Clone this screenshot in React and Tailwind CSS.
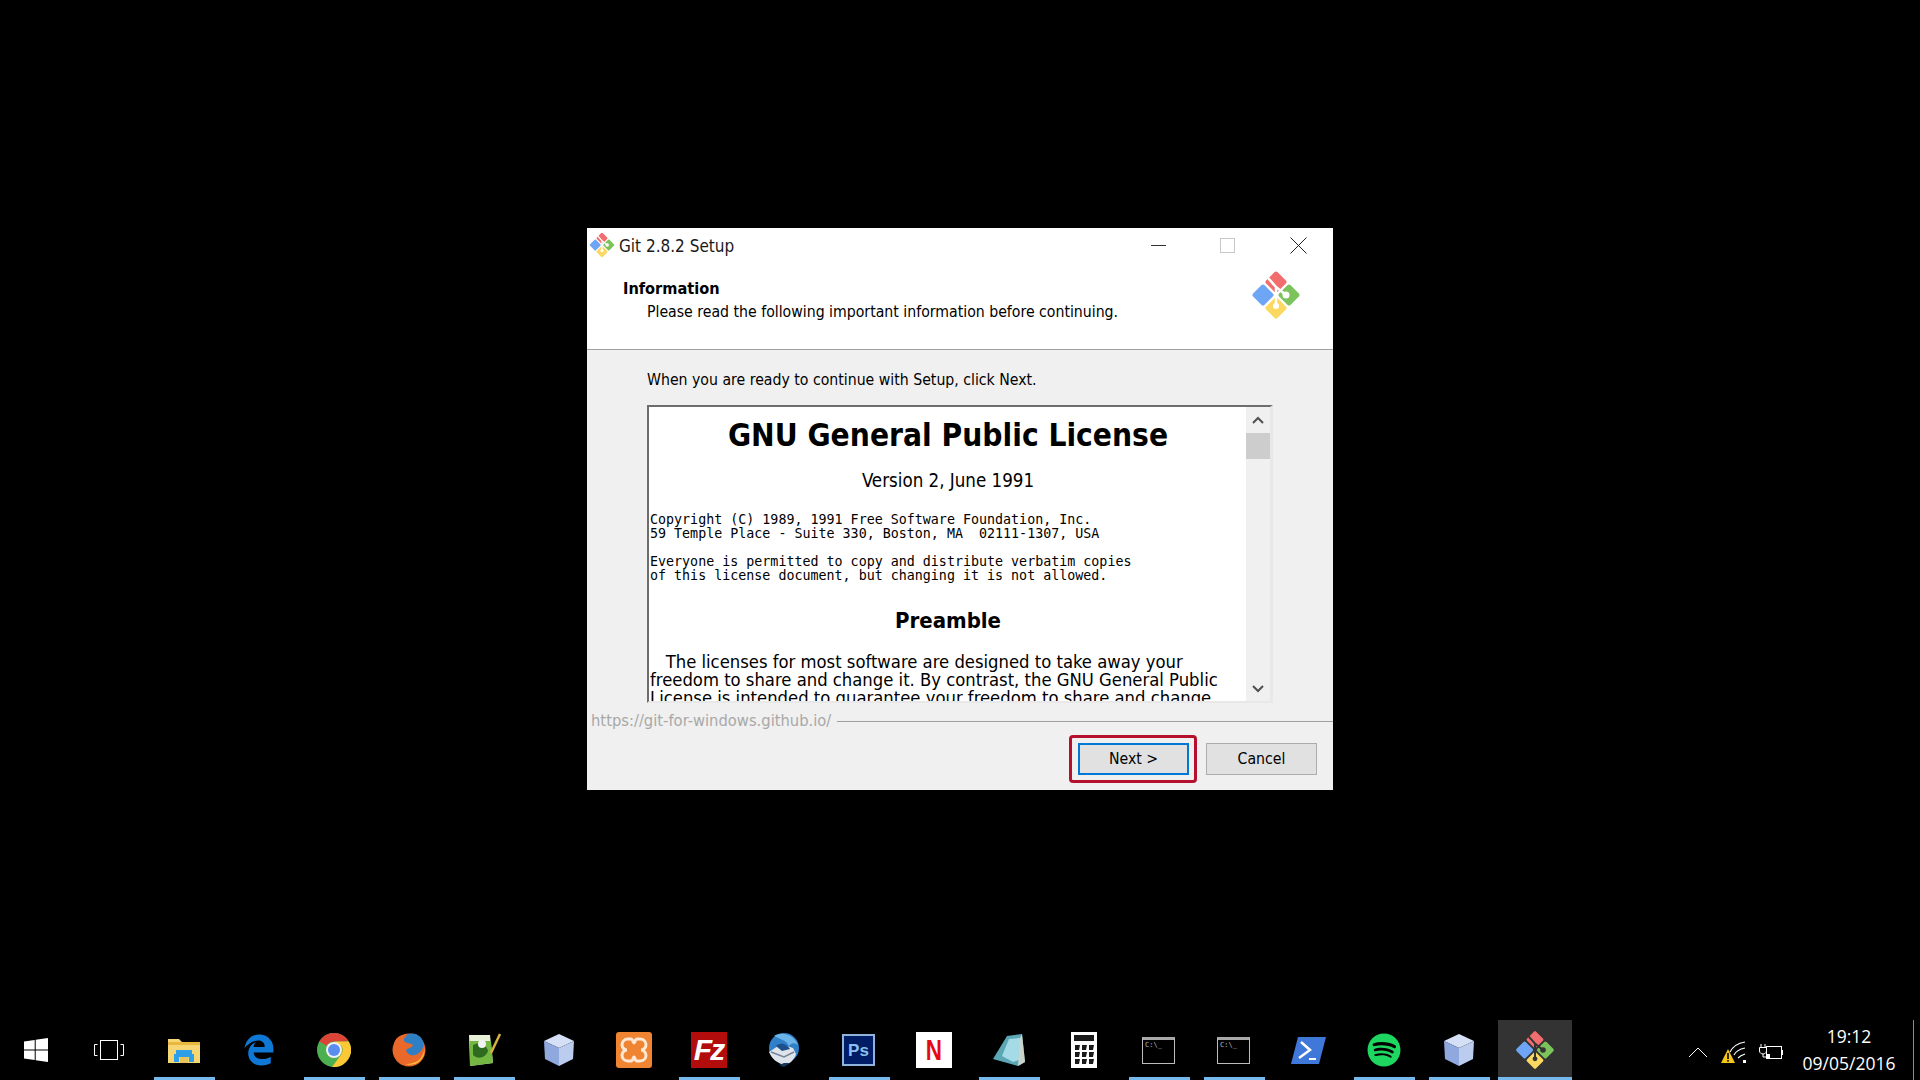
import { FaSpotify } from 'react-icons/fa';
import { FaEdgeLegacy } from 'react-icons/fa6';

const ui = "font-['DejaVu_Sans',sans-serif] [font-stretch:condensed]";

// Git for Windows diamond, the taskbar one has dark branch lines
const GitIcon = ({ className, dark }) => (
  <svg className={className} viewBox="0 0 50 50">
    <rect x="-8" y="-8" width="16" height="16" rx="2" fill="#f26d6d" transform="translate(25 12) rotate(45)" />
    <rect x="-8" y="-8" width="16" height="16" rx="2" fill="#6ea6f5" transform="translate(12 25) rotate(45)" />
    <rect x="-8" y="-8" width="16" height="16" rx="2" fill="#7cc35b" transform="translate(38 25) rotate(45)" />
    <rect x="-8" y="-8" width="16" height="16" rx="2" fill="#fbd85f" transform="translate(25 38) rotate(45)" />
    <path
      d="M17 8 L25 17 L25 36 M25 17 L35 25"
      stroke={dark ? '#333333' : '#ffffff'}
      strokeWidth="2.5"
      fill="none"
    />
    <circle cx="25" cy="36" r="3" fill={dark ? '#333333' : '#ffffff'} />
    <circle cx="35" cy="25" r="3.5" fill={dark ? '#333333' : '#ffffff'} />
  </svg>
);

const WindowsIcon = () => (
  <svg className="w-6 h-6" viewBox="0 0 24 24" fill="#ffffff">
    <path d="M0 3.4 L10.7 1.9 V11.4 H0 Z M11.7 1.8 L24 0 V11.4 H11.7 Z M0 12.6 H10.7 V22.1 L0 20.6 Z M11.7 12.6 H24 V24 L11.7 22.2 Z" />
  </svg>
);

const TaskViewIcon = () => (
  <svg className="w-[32px] h-[22px]" viewBox="0 0 32 22" fill="none" stroke="#ffffff" strokeWidth="1">
    <rect x="7.5" y="1.5" width="17" height="19" />
    <path d="M4.5 5.5 H1.5 V16.5 H4.5 M27.5 5.5 H30.5 V16.5 H27.5" />
  </svg>
);

const ExplorerIcon = () => (
  <svg className="w-8 h-[26px]" viewBox="0 0 32 26">
    <path d="M0 2 H11 L14 5 H32 V26 H0 Z" fill="#f7d774" />
    <rect x="0" y="5" width="32" height="3" fill="#e8b93e" />
    <path d="M8 13 H24 V17 H26 V25 H21 V20 H11 V25 H6 V17 H8 Z" fill="#2f9fe8" />
    <rect x="12" y="20" width="8" height="6" fill="#e9c45a" />
  </svg>
);

const ChromeIcon = () => (
  <svg className="w-[34px] h-[34px]" viewBox="0 0 34 34">
    <circle cx="17" cy="17" r="17" fill="#4caf50" />
    <path d="M17 0 A17 17 0 0 1 31.7 8.5 L17 8.5 A8.5 8.5 0 0 0 9.6 12.8 L2.3 8.5 A17 17 0 0 1 17 0 Z" fill="#db4437" />
    <path d="M31.7 8.5 A17 17 0 0 1 15 33.9 L24.4 21.3 A8.5 8.5 0 0 0 24.4 12.7 L17 8.5 Z" fill="#fcc934" />
    <circle cx="17" cy="17" r="8" fill="#f1f1f1" />
    <circle cx="17" cy="17" r="6" fill="#5b8def" />
  </svg>
);

const FirefoxIcon = () => (
  <svg className="w-[34px] h-[34px]" viewBox="0 0 34 34">
    <circle cx="17" cy="17" r="16.5" fill="#e8652b" />
    <circle cx="20" cy="12" r="11.5" fill="#2f7fc4" />
    <path d="M3 8 C6 2 13 1 15 3 C12 4 11 7 13 9 C16 11 19 10 21 12 C20 15 16 15 14 17 C15 21 19 23 23 22 C27 21 30 17 32 13 C33 22 28 31 19 32 C9 33 2 25 1.500 17 C1.500 14 2 11 3 8 Z" fill="#e9682a" />
    <path d="M28 26 C31 22 33 18 32 13 C34 21 30 28 23 31 C19 32 16 32 13 31 C19 31 24 30 28 26 Z" fill="#fbc43c" />
  </svg>
);

const NotepadIcon = () => (
  <svg className="w-[34px] h-[34px]" viewBox="0 0 34 34">
    <path d="M2 2 H23 L26 30 L3 33 Z" fill="#e8f0d8" />
    <path d="M3 8 H24 L26 30 L3 33 Z" fill="#74b843" />
    <path d="M6 12 C12 8 20 12 21 18 C18 26 10 26 6 22 Z" fill="#2e6b1e" />
    <circle cx="15" cy="11" r="4" fill="#f2f2f2" />
    <path d="M33 1 L24 20" stroke="#d8b23e" strokeWidth="2.5" />
  </svg>
);

const CubeIcon = () => (
  <svg className="w-8 h-[34px]" viewBox="0 0 32 34">
    <polygon points="16,1 31,8 16,15 1,8" fill="#d5dff5" />
    <polygon points="1,8 16,15 16,33 2,26" fill="#8fa9df" />
    <polygon points="31,8 16,15 16,33 30,26" fill="#bcccee" />
  </svg>
);

const XamppIcon = () => (
  <svg className="w-9 h-9" viewBox="0 0 36 36">
    <rect width="36" height="36" rx="3" fill="#ef8532" />
    <path
      d="M12 7 H15 C17 7 17 11 18 11 C19 11 19 7 21 7 H24 C28 7 30 10 30 13 C30 16 27 18 25 18 C27 18 30 20 30 23 C30 26 28 29 24 29 H21 C19 29 19 25 18 25 C17 25 17 29 15 29 H12 C8 29 6 26 6 23 C6 20 9 18 11 18 C9 18 6 16 6 13 C6 10 8 7 12 7 Z"
      fill="none"
      stroke="#ffe9d6"
      strokeWidth="3"
    />
  </svg>
);

const FileZillaIcon = () => (
  <div className="w-9 h-9 bg-[#b30c0c] flex items-center justify-center text-white font-['Liberation_Sans',sans-serif] font-bold italic text-[30px] leading-none tracking-[-2px]">
    Fz
  </div>
);

const ThunderbirdIcon = () => (
  <svg className="w-[34px] h-[34px]" viewBox="0 0 34 34">
    <circle cx="17" cy="15" r="15" fill="#2f7fc9" />
    <path d="M7 3 C14 -2 27 1 31 12 C27 9 24 10 22 13 C19 7 13 6 7 3 Z" fill="#6cb4e8" />
    <path d="M2 19 L14 11 L26 15 L29 21 C27 27 23 31 17 32 C10 30 5 26 2 19 Z" fill="#dfe3ea" />
    <path d="M4 19 L17 24 L27 19" stroke="#77849a" strokeWidth="1.500" fill="none" />
    <path d="M9 13 C13 9 20 11 23 16 L15 18 Z" fill="#1d4f8a" />
    <path d="M12 32 L17 34 L23 30 L17 30 Z" fill="#16395f" />
  </svg>
);

const PhotoshopIcon = () => (
  <div className="w-[33px] h-[32px] bg-[#001d66] border-2 border-[#8fb4dc] flex items-center justify-center text-[#8cc0f0] font-['Liberation_Sans',sans-serif] font-bold text-[17px] leading-none">
    Ps
  </div>
);

const NetflixIcon = () => (
  <div className="w-9 h-9 bg-white flex items-center justify-center text-[#e50914] font-['Liberation_Sans',sans-serif] font-bold text-[30px] leading-none">
    <span className="inline-block scale-x-75">N</span>
  </div>
);

const CrystalIcon = () => (
  <svg className="w-8 h-8" viewBox="0 0 32 32">
    <polygon points="0,25 14,2 29,0 32,28 25,32" fill="#5aa7b5" />
    <polygon points="9,22 16,5 27,4 29,25 20,28" fill="#a5dbe6" />
    <polygon points="29,0 32,28 25,32 27,4" fill="#c9d4ca" />
  </svg>
);

const CalculatorIcon = () => (
  <svg className="w-[26px] h-9" viewBox="0 0 26 36">
    <rect width="26" height="36" fill="#ffffff" />
    <rect x="3" y="3" width="20" height="6" fill="#1a1a1a" />
    <path d="M4 13 H9 L8 18 H4 Z M11 13 H16 L15 18 H11 Z M18 13 H23 L22 18 H18 Z M4 20 H9 L8 25 H4 Z M11 20 H16 L15 25 H11 Z M18 20 H23 L22 25 H18 Z M4 27 H9 L8 32 H4 Z M11 27 H16 L15 32 H11 Z M18 27 H23 L22 32 H18 Z" fill="#1a1a1a" />
  </svg>
);

const CmdIcon = () => (
  <div className="w-[33px] h-[27px] bg-black border border-[#bdbdbd] border-t-[3px] border-t-[#a8a8a8] pl-[2px] text-[#b8b8b8] font-['DejaVu_Sans_Mono',monospace] text-[7px] leading-[10px]">
    C:\_
  </div>
);

const PowerShellIcon = () => (
  <svg className="w-[35px] h-[27px]" viewBox="0 0 35 27">
    <polygon points="7,0 35,0 28,27 0,27" fill="#3f78d8" />
    <path d="M10 5 L19 13 L8 21" stroke="#ffffff" strokeWidth="2.5" fill="none" />
    <path d="M18 22 H25" stroke="#ffffff" strokeWidth="2" />
  </svg>
);

const SpotifyIcon = () => <FaSpotify className="w-[34px] h-[34px] text-[#1ed760]" />;
const EdgeIcon = () => <FaEdgeLegacy className="w-8 h-8 text-[#0f78d4]" />;
const TaskbarGit = () => <GitIcon className="w-10 h-10" dark />;

const taskbarItems = [
  { id: 'explorer', Icon: ExplorerIcon, open: true },
  { id: 'edge', Icon: EdgeIcon },
  { id: 'chrome', Icon: ChromeIcon, open: true },
  { id: 'firefox', Icon: FirefoxIcon, open: true },
  { id: 'notepad', Icon: NotepadIcon, open: true },
  { id: 'cube', Icon: CubeIcon },
  { id: 'xampp', Icon: XamppIcon },
  { id: 'filezilla', Icon: FileZillaIcon, open: true },
  { id: 'thunderbird', Icon: ThunderbirdIcon },
  { id: 'photoshop', Icon: PhotoshopIcon, open: true },
  { id: 'netflix', Icon: NetflixIcon },
  { id: 'crystal', Icon: CrystalIcon, open: true },
  { id: 'calculator', Icon: CalculatorIcon },
  { id: 'cmd1', Icon: CmdIcon, open: true },
  { id: 'cmd2', Icon: CmdIcon, open: true },
  { id: 'powershell', Icon: PowerShellIcon },
  { id: 'spotify', Icon: SpotifyIcon, open: true },
  { id: 'cube2', Icon: CubeIcon, open: true },
];

const TaskbarItem = ({ Icon, open, active }) => (
  <div className={`h-[60px] flex flex-col ${active ? 'w-[74px] bg-[#333333] ml-[2px]' : 'w-[75px]'}`}>
    <div className="flex-1 flex items-center justify-center pt-[3px]">
      <Icon />
    </div>
    <div className={`h-[3px] ${active ? 'bg-[#76b9ed]' : open ? 'bg-[#76b9ed] ml-[8px] mr-[6px]' : ''}`} />
  </div>
);

const Taskbar = () => (
  <div className="h-[60px] flex items-stretch bg-black">
    <div className="w-[71px] flex items-center justify-center">
      <WindowsIcon />
    </div>
    <div className="w-[75px] flex items-center justify-center">
      <TaskViewIcon />
    </div>
    {taskbarItems.map((item) => (
      <TaskbarItem key={item.id} Icon={item.Icon} open={item.open} />
    ))}
    <TaskbarItem Icon={TaskbarGit} active />

    {/* tray */}
    <div className="flex-1 flex items-center pl-[116px] pt-[3px]">
      <svg className="w-[20px] h-[10px]" viewBox="0 0 20 10" fill="none" stroke="#ffffff">
        <path d="M1 10 L10 1 L19 10" />
      </svg>
      <svg className="w-[28px] h-[24px] ml-[13px]" viewBox="0 0 28 24" fill="none">
        <path d="M9 12 C12 6 18 3 24 2 M13 15 C15 11 19 9 24 8 M17 18 C19 16 21 15 24 14" stroke="#ffffff" strokeWidth="1.2" />
        <rect x="22" y="20" width="3" height="3" fill="#ffffff" />
        <polygon points="7,9 14,23 0,23" fill="#f5c518" />
        <rect x="6.2" y="13" width="1.6" height="6" fill="#000000" />
        <rect x="6.2" y="20" width="1.6" height="1.6" fill="#000000" />
      </svg>
      <svg className="w-[24px] h-[18px] ml-[10px]" viewBox="0 0 24 18" fill="none" stroke="#ffffff" strokeWidth="1">
        <path d="M2 1 V4 M6 1 V4 M0.5 4.5 H7.5 V8 C7.5 10 5.5 11 4 11 C2.5 11 0.5 10 0.5 8 Z M4 11 V14 H7" />
        <rect x="7.5" y="3.5" width="15" height="12" />
        <rect x="8" y="11" width="3" height="4" fill="#ffffff" stroke="none" />
        <path d="M23.5 7 V12" />
      </svg>
      <div className="w-[110px] ml-[11px] pb-[4px] text-center text-white font-['Open_Sans',sans-serif] text-[17.5px] leading-[27px]">
        <div>19:12</div>
        <div>09/05/2016</div>
      </div>
    </div>
    <div className="w-[7px] flex">
      <div className="w-px bg-[#8a8a8a]" />
    </div>
  </div>
);

const ScrollBar = () => (
  <div className="w-[24px] bg-[#f0f0f0] flex flex-col">
    <div className="h-[26px] flex items-center justify-center">
      <svg className="w-3 h-2" viewBox="0 0 12 8" fill="none" stroke="#505050" strokeWidth="2">
        <path d="M1 7 L6 2 L11 7" />
      </svg>
    </div>
    <div className="h-[26px] bg-[#cdcdcd]" />
    <div className="flex-1" />
    <div className="h-[24px] flex items-center justify-center">
      <svg className="w-3 h-2" viewBox="0 0 12 8" fill="none" stroke="#505050" strokeWidth="2">
        <path d="M1 1 L6 6 L11 1" />
      </svg>
    </div>
  </div>
);

const License = () => (
  <div className="flex-1 overflow-hidden text-black pl-[1px]">
    <div className={`${ui} font-bold text-center text-[31.4px] leading-[34px] mt-[11px]`}>GNU General Public License</div>
    <div className={`${ui} text-center text-[18.6px] leading-[20px] mt-[19px]`}>Version 2, June 1991</div>
    <div className="font-['DejaVu_Sans_Mono',monospace] text-[13.33px] leading-[14px] mt-[22px] whitespace-pre">
      <div>Copyright (C) 1989, 1991 Free Software Foundation, Inc.</div>
      <div>59 Temple Place - Suite 330, Boston, MA  02111-1307, USA</div>
      <div className="mt-[14px]">Everyone is permitted to copy and distribute verbatim copies</div>
      <div>of this license document, but changing it is not allowed.</div>
    </div>
    <div className={`${ui} font-bold text-center text-[22px] leading-[26px] mt-[25px]`}>Preamble</div>
    <div className={`${ui} text-[18.3px] leading-[18px] mt-[19px] whitespace-pre`}>
      <div>   The licenses for most software are designed to take away your</div>
      <div>freedom to share and change it. By contrast, the GNU General Public</div>
      <div>License is intended to guarantee your freedom to share and change</div>
    </div>
  </div>
);

const SetupDialog = () => (
  <div className={`${ui} w-[746px] h-[562px] bg-[#f0f0f0] flex flex-col text-black text-[15.7px]`}>
    {/* title bar */}
    <div className="h-[37px] bg-white flex items-center">
      <GitIcon className="w-[26px] h-[26px] ml-[2px] mb-[4px]" />
      <span className="ml-[4px] text-[#1a1a1a] text-[17px] pt-[1px]">Git 2.8.2 Setup</span>
      <div className="flex-1" />
      <svg className="w-[172px] h-[20px] mb-[3px]" viewBox="0 0 172 20" fill="none">
        <path d="M0 10.5 H15" stroke="#333333" strokeWidth="1" />
        <rect x="69.5" y="3.5" width="14" height="14" stroke="#c8c8c8" />
        <path d="M139.5 2.5 L155.5 18.5 M155.5 2.5 L139.5 18.5" stroke="#222222" strokeWidth="1" />
      </svg>
      <div className="w-[10px]" />
    </div>

    {/* page header */}
    <div className="h-[85px] bg-white border-b border-[#a0a0a0] flex">
      <div className="flex-1 pl-[36px] pt-[13px]">
        <div className="font-bold text-[16.2px] leading-[22px]">Information</div>
        <div className="pl-[24px] leading-[24px]">Please read the following important information before continuing.</div>
      </div>
      <GitIcon className="w-[50px] h-[50px] mr-[32px] mt-[5px]" />
    </div>

    {/* page body */}
    <div className="flex-1 pl-[60px] pr-[60px] flex flex-col">
      <div className="leading-[20px] mt-[20px]">When you are ready to continue with Setup, click Next.</div>
      <div className="h-[298px] mt-[15px] flex bg-white border-t-2 border-l-2 border-r-[3px] border-b-2 border-t-[#6d6d6d] border-l-[#6d6d6d] border-r-[#e8e8e8] border-b-[#e8e8e8]">
        <License />
        <ScrollBar />
      </div>
    </div>

    {/* branding line */}
    <div className="h-[20px] flex items-center pl-[4px]">
      <span className="text-[#a8a8a8] text-[16.4px]">https://git-for-windows.github.io/</span>
      <div className="flex-1 h-px bg-[#a0a0a0] ml-[6px]" />
    </div>

    {/* buttons */}
    <div className="h-[59px] flex justify-end items-start pr-[16px] pt-[4px] gap-[9px]">
      <div className="py-[5px] pl-[6px] pr-[5px] border-[3px] border-[#b5102e] rounded-[4px]">
        <button className="block w-[111px] h-[32px] bg-[#e1e1e1] border-2 border-[#0078d7]">Next &gt;</button>
      </div>
      <button className="w-[111px] h-[32px] mt-[8px] bg-[#e1e1e1] border border-[#adadad]">Cancel</button>
    </div>
  </div>
);

export default function App() {
  return (
    <div className="w-[1920px] h-[1080px] bg-black flex flex-col overflow-hidden">
      <div className="h-[1020px] flex justify-center pt-[228px]">
        <SetupDialog />
      </div>
      <Taskbar />
    </div>
  );
}
